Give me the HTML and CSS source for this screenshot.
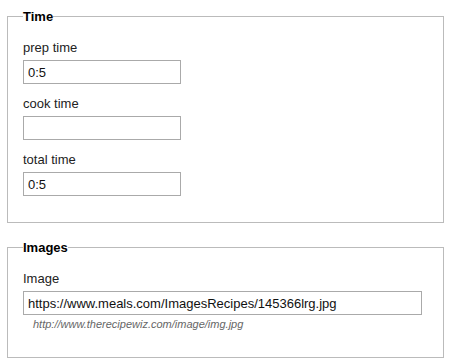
FILE: index.html
```html
<!DOCTYPE html>
<html lang="en">
<head>
    <meta charset="UTF-8">
    <meta name="viewport" content="width=device-width, initial-scale=1.0">
    <title>Recipe</title>
    <link rel="stylesheet" href="styles.css">
</head>
<body>
    <form class="recipe-form">
        <fieldset class="group">
            <legend>Time</legend>
            <div class="field">
                <label for="prepTime">prep time</label>
                <input type="text" id="prepTime" class="input-short" value="0:5">
            </div>
            <div class="field">
                <label for="cookTime">cook time</label>
                <input type="text" id="cookTime" class="input-short" value="">
            </div>
            <div class="field">
                <label for="totalTime">total time</label>
                <input type="text" id="totalTime" class="input-short" value="0:5">
            </div>
        </fieldset>

        <fieldset class="group">
            <legend>Images</legend>
            <div class="field">
                <label for="image">Image</label>
                <input type="text" id="image" class="input-long" value="https://www.meals.com/ImagesRecipes/145366lrg.jpg">
                <div class="hint">http://www.therecipewiz.com/image/img.jpg</div>
            </div>
        </fieldset>
    </form>
</body>
</html>
```

FILE: styles.css
```css
body {
    margin: 0;
    padding: 0;
    font-family: Arial, "Liberation Sans", sans-serif;
    font-size: 13px;
    color: #222;
    background: #fff;
}

.recipe-form {
    padding: 9px 8px 0 7px;
}

.group {
    margin: 0 0 17px 0;
    padding: 16px 15px 26px 15px;
    border: 1px solid #bbb;
    min-width: 0;
}

.group legend {
    padding: 0;
    font-weight: bold;
    font-size: 13px;
    color: #000;
    line-height: 15px;
}

.field {
    margin-bottom: 12px;
}

.field:last-child {
    margin-bottom: 0;
}

.field label {
    display: block;
    line-height: 15px;
    margin-bottom: 5px;
}

.field input {
    box-sizing: border-box;
    height: 24px;
    margin: 0;
    padding: 0 4px;
    border: 1px solid #aaa;
    font-family: Arial, "Liberation Sans", sans-serif;
    font-size: 13px;
    color: #111;
    display: block;
}

.input-short {
    width: 158px;
}

.input-long {
    width: 399px;
}

.hint {
    margin: 2px 0 0 10px;
    font-size: 11px;
    font-style: italic;
    color: #666;
    line-height: 14px;
}
```
